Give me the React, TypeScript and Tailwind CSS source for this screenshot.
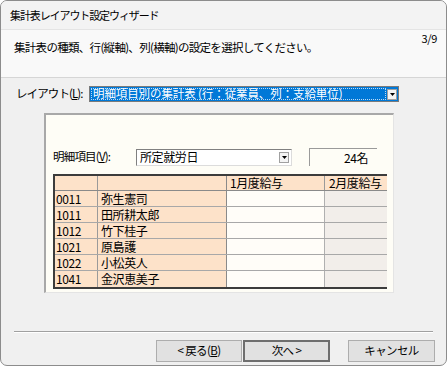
import React from "react";

const rows = [
  ["0011", "弥生憲司"],
  ["1011", "田所耕太郎"],
  ["1012", "竹下桂子"],
  ["1021", "原島護"],
  ["1022", "小松英人"],
  ["1041", "金沢恵美子"],
];

function Arrow() {
  return (
    <div className="w-[10px] h-[11px] bg-[#f4f4f4] border border-[#a0a0a0] flex items-center justify-center">
      <svg width="5" height="3" viewBox="0 0 5 3">
        <path d="M0 0h5L2.5 3z" fill="#000" />
      </svg>
    </div>
  );
}

export default function App() {
  const font = { fontFamily: '"Noto Sans CJK JP", "Noto Sans", sans-serif' };
  return (
    <div className="w-[448px] h-[366px] bg-white overflow-hidden" style={font}>
      <div className="w-[447px] h-[366px] rounded-[7px] border border-[#8c8c8c] bg-[#f0f0f0] flex flex-col overflow-hidden text-black">
        {/* title */}
        <div className="h-[29px] bg-[#f3f3f3] border-b border-[#e4e4e4] flex items-center pl-[9px] text-[11px] tracking-[-1.1px] leading-none">
          集計表レイアウト設定ウィザード
        </div>
        {/* header */}
        <div className="h-[48px] bg-[#f9f9f9] border-b border-[#d6d6d6] flex items-start justify-between pl-[13px] pr-[9px]">
          <div className="mt-[12px] text-[11.5px] tracking-[-0.7px] leading-none">
            集計表の種類、行(縦軸)、列(横軸)の設定を選択してください。
          </div>
          <div className="mt-[3px] text-[11px] leading-none tracking-[-0.3px]">3/9</div>
        </div>
        {/* body */}
        <div className="flex-1 flex flex-col">
          <div className="flex items-center mt-[8px] h-[16px]">
            <div className="ml-[15px] w-[73px] text-[11.5px] tracking-[-0.9px] leading-none">
              レイアウト(<span className="underline">L</span>):
            </div>
            <div className="w-[310px] h-[16px] bg-[#0078d7] border border-[#7a7a7a] flex items-center justify-between pr-[1px]">
              <div className="ml-[1px] h-[12px] flex-1 border border-dotted border-[#bcd9f2] flex items-center text-white text-[11.5px] tracking-[-0.1px] leading-none pl-[1px]">
                明細項目別の集計表 (行：従業員、列：支給単位)
              </div>
              <div className="ml-[1px]">
                <Arrow />
              </div>
            </div>
          </div>
          {/* panel */}
          <div className="ml-[43px] mt-[11px] w-[350px] h-[180px] bg-[#fefdf6] border-t-2 border-l-2 border-t-[#a8a8a8] border-l-[#a8a8a8] border-r border-b border-r-[#e4e4e4] border-b-[#e4e4e4] flex flex-col">
            <div className="flex items-center mt-[33px] h-[18px]">
              <div className="ml-[7px] w-[83px] text-[11.5px] tracking-[-0.8px] leading-none">
                明細項目(<span className="underline">V</span>):
              </div>
              <div className="w-[156px] h-[17px] bg-white border-t border-l border-[#808080] border-r border-b border-r-[#dcdcdc] border-b-[#dcdcdc] flex items-center justify-between pr-[2px]">
                <span className="pl-[3px] text-[12px] tracking-[-0.4px] leading-none">所定就労日</span>
                <Arrow />
              </div>
              <div className="ml-[17px] w-[68px] h-[18px] border-t border-l border-[#9a9a9a] flex items-center justify-end pr-[9px] text-[12px] tracking-[-0.4px] leading-none">
                24名
              </div>
            </div>
            {/* table */}
            <div className="ml-[7px] mt-[8px] w-[334px] border-2 border-[#3c3c3c] border-r-0 bg-[#fde2c9] text-[12px] leading-none tracking-[-0.4px]">
              <div className="flex h-[15px] border-b border-[#8a8a8a]">
                <div className="w-[43px] border-r border-[#9a9a9a]" />
                <div className="w-[129px] border-r border-[#8a8a8a]" />
                <div className="w-[98px] border-r border-[#9a9a9a] flex items-center pl-[3px]">1月度給与</div>
                <div className="flex-1 flex items-center pl-[4px]">2月度給与</div>
              </div>
              {rows.map((r, i) => (
                <div key={r[0]} className={`flex h-[16px] ${i < rows.length - 1 ? "border-b border-[#a8a8a8]" : ""}`}>
                  <div className="w-[43px] border-r border-[#9a9a9a] flex items-center pl-[1px]">{r[0]}</div>
                  <div className="w-[129px] border-r border-[#8a8a8a] flex items-center pl-[3px]">{r[1]}</div>
                  <div className="w-[98px] border-r border-[#b0b0b0] bg-[#fffdf8]" />
                  <div className="flex-1 bg-[#f2eeea]" />
                </div>
              ))}
            </div>
          </div>
          {/* separator */}
          <div className="mx-[13px] mt-[38px] h-[2px] border-t border-[#a0a0a0] border-b border-b-white" />
          {/* buttons */}
          <div className="flex mt-[7px] text-[11.5px] tracking-[-0.6px] leading-none">
            <div className="ml-[155px] w-[86px] h-[22px] bg-[#e1e1e1] border border-[#adadad] flex items-center justify-center">
              &lt; 戻る(<span className="underline">B</span>)
            </div>
            <div className="ml-[1px] w-[87px] h-[22px] bg-[#e1e1e1] border-2 border-[#6e6e6e] flex items-center justify-center">
              次へ &gt;
            </div>
            <div className="ml-[18px] w-[87px] h-[22px] bg-[#e1e1e1] border border-[#adadad] flex items-center justify-center">
              キャンセル
            </div>
          </div>
        </div>
      </div>
    </div>
  );
}
